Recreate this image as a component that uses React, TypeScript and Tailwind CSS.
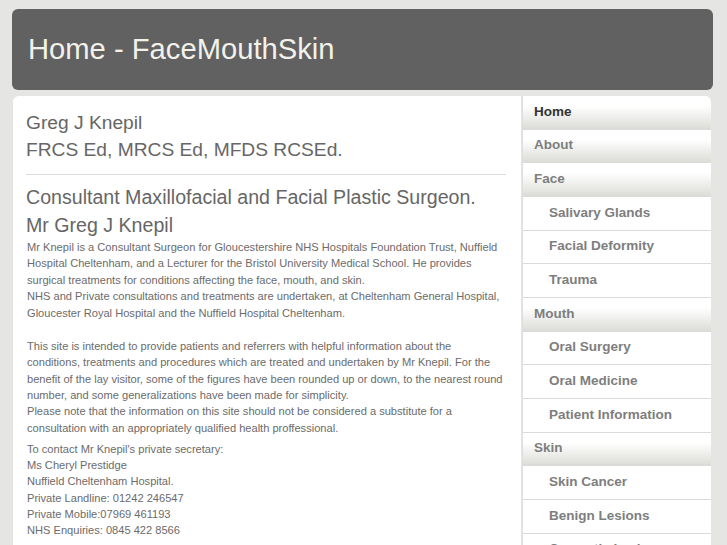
const navItems = [
  { label: 'Home', top: true, active: true },
  { label: 'About', top: true },
  { label: 'Face', top: true },
  { label: 'Salivary Glands' },
  { label: 'Facial Deformity' },
  { label: 'Trauma' },
  { label: 'Mouth', top: true },
  { label: 'Oral Surgery' },
  { label: 'Oral Medicine' },
  { label: 'Patient Information' },
  { label: 'Skin', top: true },
  { label: 'Skin Cancer' },
  { label: 'Benign Lesions' },
  { label: 'Cosmetic Lesions' },
];

const introLines = [
  'Mr Knepil is a Consultant Surgeon for Gloucestershire NHS Hospitals Foundation Trust, Nuffield',
  'Hospital Cheltenham, and a Lecturer for the Bristol University Medical School. He provides',
  'surgical treatments for conditions affecting the face, mouth, and skin.',
  'NHS and Private consultations and treatments are undertaken, at Cheltenham General Hospital,',
  'Gloucester Royal Hospital and the Nuffield Hospital Cheltenham.',
  '',
  'This site is intended to provide patients and referrers with helpful information about the',
  'conditions, treatments and procedures which are treated and undertaken by Mr Knepil. For the',
  'benefit of the lay visitor, some of the figures have been rounded up or down, to the nearest round',
  'number, and some generalizations have been made for simplicity.',
  'Please note that the information on this site should not be considered a substitute for a',
  'consultation with an appropriately qualified health proffessional.',
];

const contactLines = [
  "To contact Mr Knepil's private secretary:",
  'Ms Cheryl Prestidge',
  'Nuffield Cheltenham Hospital.',
  'Private Landline: 01242 246547',
  'Private Mobile:07969 461193',
  'NHS Enquiries: 0845 422 8566',
];

export default function App() {
  return (
    <div
      className="h-[545px] overflow-hidden bg-[#e5e5e3] pt-[9px]"
      style={{ fontFamily: '"Liberation Sans", Arial, sans-serif' }}
    >
      {/* Header */}
      <div className="ml-[12px] w-[701px] h-[81px] rounded-[6px] bg-[#616161] flex items-center pl-[16px]">
        <h1 className="text-[29.2px] leading-none text-[#f2f1ea]">Home - FaceMouthSkin</h1>
      </div>

      {/* Body */}
      <div className="ml-[13px] w-[698px] mt-[6px] flex">
        {/* Content */}
        <div className="w-[508px] bg-white rounded-tl-[6px] pl-[13px] pr-[14px] pt-[13px] h-[460px]">
          <h2 className="text-[19.2px] leading-[27px] text-[#666]">
            Greg J Knepil
            <br />
            FRCS Ed, MRCS Ed, MFDS RCSEd.
          </h2>
          <div className="mt-[11px] mb-[8px] w-[480px] border-t border-[#dcdcdc]" />
          <h2 className="text-[19.6px] leading-[28px] text-[#666]">
            Consultant Maxillofacial and Facial Plastic Surgeon.
            <br />
            Mr Greg J Knepil
          </h2>
          <div className="text-[11.1px] text-[#6b6b6b] pl-[1px] whitespace-nowrap">
            <div className="leading-[16.45px]">
              {introLines.map((line, i) => (
                <div key={i} className="h-[16.45px]">{line}</div>
              ))}
            </div>
            <div className="mt-[4.5px] leading-[16.25px]">
              {contactLines.map((line) => (
                <div key={line} className="h-[16.25px]">{line}</div>
              ))}
            </div>
          </div>
        </div>

        {/* Navigation */}
        <nav className="w-[189px] ml-[1px] border-l border-[#dedede] rounded-tr-[6px] overflow-hidden bg-white">
          {navItems.map((item) => (
            <div
              key={item.label}
              className={`h-[33.67px] flex items-center border-b border-[#dadada] text-[13.5px] font-bold pb-[1px] ${
                item.top
                  ? 'pl-[11px] bg-gradient-to-b from-white from-30% to-[#dcdcd7]'
                  : 'pl-[26px] bg-white'
              } ${item.active ? 'text-[#333]' : 'text-[#7e7e7e]'}`}
            >
              {item.label}
            </div>
          ))}
        </nav>
      </div>
    </div>
  );
}
